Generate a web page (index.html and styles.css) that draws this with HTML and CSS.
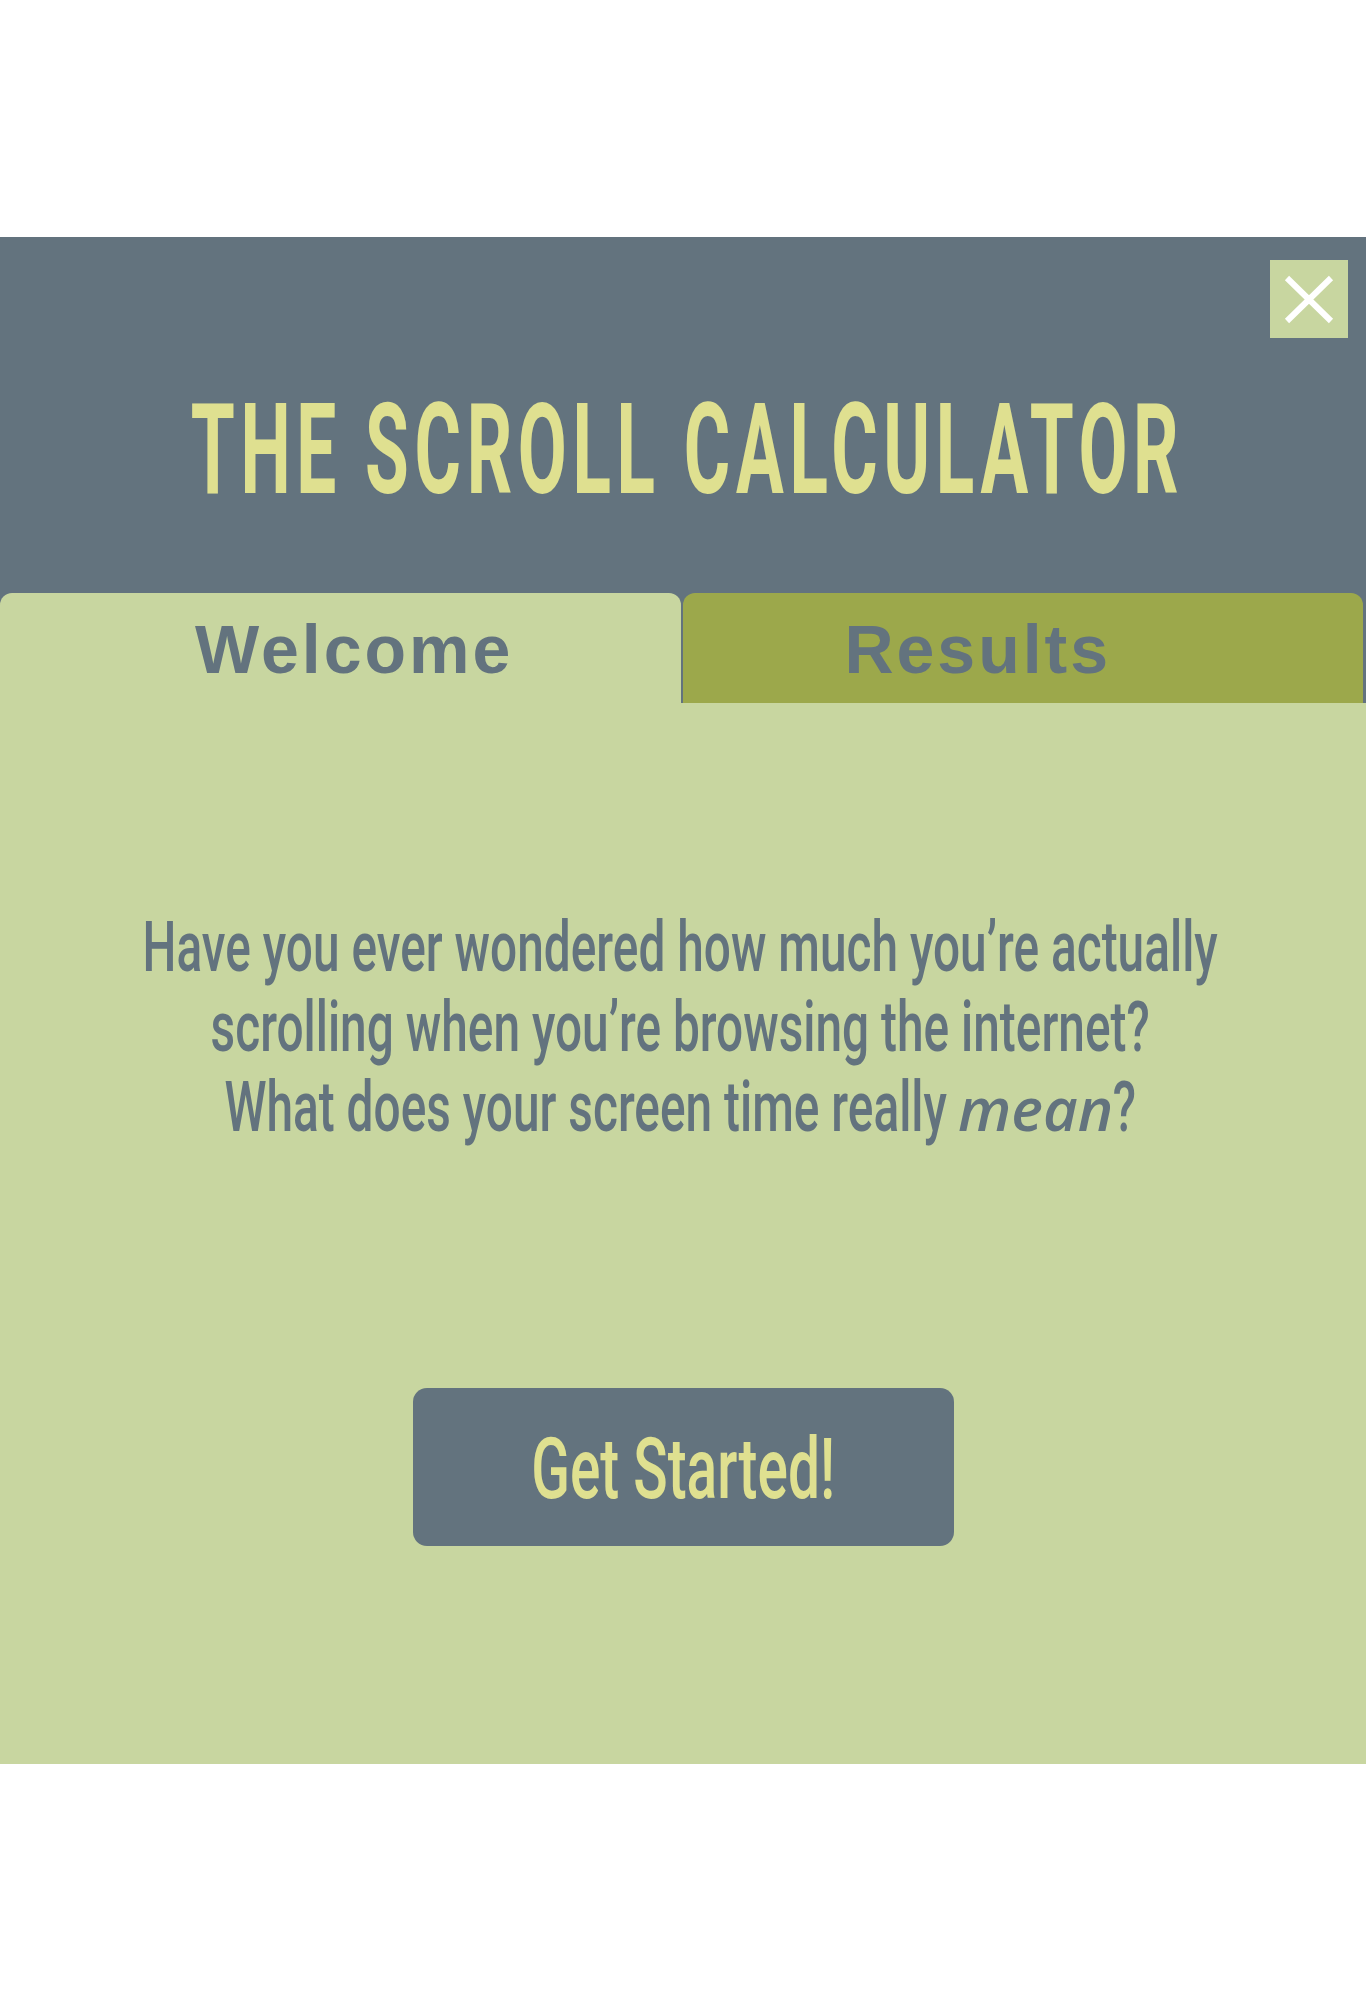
FILE: index.html
```html
<!DOCTYPE html>
<html lang="en">
<head>
<meta charset="utf-8">
<title>The Scroll Calculator</title>
<link rel="stylesheet" href="styles.css">
</head>
<body>
<div class="top-space"></div>
<header class="header">
  <button class="close" type="button" aria-label="Close">
    <svg viewBox="0 0 78 78" width="78" height="78" aria-hidden="true"><path d="M17 18 L61 61 M61 18 L17 61" stroke="#ffffff" stroke-width="6" fill="none"/></svg>
  </button>
  <h1 class="title"><span class="title-text">THE SCROLL CALCULATOR</span></h1>
  <nav class="tabs">
    <div class="tab tab-welcome">Welcome</div>
    <div class="tab tab-results">Results</div>
  </nav>
</header>
<main class="panel">
  <div class="intro-wrap">
    <p class="intro">Have you ever wondered how much you’re actually<br>scrolling when you’re browsing the internet?<br>What does your screen time really <em class="mean">mean</em>?</p>
  </div>
  <button class="start" type="button"><span class="start-label">Get Started!</span></button>
</main>
</body>
</html>
```

FILE: styles.css
```css
* {
  box-sizing: border-box;
}

html,
body {
  margin: 0;
  padding: 0;
  background: #ffffff;
}

body {
  font-family: Roboto, "Liberation Sans", sans-serif;
  overflow-x: hidden;
}

.top-space {
  height: 237px;
}

.header {
  position: relative;
  background: #63737e;
  height: 466px;
  padding-top: 149px;
  display: flex;
  flex-direction: column;
}

.close {
  position: absolute;
  top: 23px;
  right: 18px;
  width: 78px;
  height: 78px;
  padding: 0;
  border: 0;
  background: #c8d6a0;
  display: block;
  cursor: pointer;
}

.close svg {
  display: block;
}

.title {
  margin: 0;
  height: 127px;
  display: flex;
  justify-content: center;
  font-family: Roboto, "Liberation Sans", sans-serif;
  font-weight: 700;
  font-size: 127px;
  line-height: 127px;
  color: #dfe090;
  white-space: nowrap;
}

.title-text {
  display: block;
  flex-shrink: 0;
  padding-left: 16px;
  letter-spacing: 10px;
  transform: scaleX(0.56);
}

.tabs {
  margin-top: auto;
  height: 110px;
  display: grid;
  grid-template-columns: 1fr 1fr;
  column-gap: 2px;
  padding-right: 3px;
}

.tab {
  min-width: 0;
  border-radius: 12px 12px 0 0;
  padding-top: 22px;
  text-align: center;
  font-family: "Liberation Sans", Arial, sans-serif;
  font-weight: 700;
  font-size: 68px;
  line-height: 68px;
  letter-spacing: 3px;
  color: #63737e;
}

.tab-welcome {
  background: #c8d6a0;
  padding-left: 28px;
}

.tab-results {
  background: #9ca84b;
  padding-right: 90px;
}

.panel {
  background: #c8d6a0;
  height: 1061px;
  padding-top: 204px;
  display: flex;
  flex-direction: column;
  align-items: center;
  overflow: hidden;
}

.intro-wrap {
  width: 100%;
  height: 240px;
  display: flex;
  justify-content: center;
  padding-right: 6px;
}

.intro {
  margin: 0;
  flex-shrink: 0;
  white-space: nowrap;
  text-align: center;
  font-family: Roboto, "Liberation Sans", sans-serif;
  font-weight: 500;
  font-size: 70px;
  line-height: 80px;
  color: #63737e;
  transform: scaleX(0.683);
}

.mean {
  display: inline-block;
  font-family: "Open Sans", sans-serif;
  font-style: italic;
  font-weight: 600;
  font-size: 60px;
  line-height: 1;
  margin: 0 35px;
  transform: scaleX(1.464);
}

.start {
  margin-top: 241px;
  width: 541px;
  height: 158px;
  padding: 38px 0 0;
  border: 0;
  border-radius: 14px;
  background: #63737e;
  color: #dfe090;
  display: flex;
  justify-content: center;
  align-items: flex-start;
  cursor: pointer;
}

.start-label {
  display: block;
  flex-shrink: 0;
  white-space: nowrap;
  font-family: Roboto, "Liberation Sans", sans-serif;
  font-weight: 500;
  font-size: 86px;
  line-height: 86px;
  transform: scaleX(0.66);
}
```
